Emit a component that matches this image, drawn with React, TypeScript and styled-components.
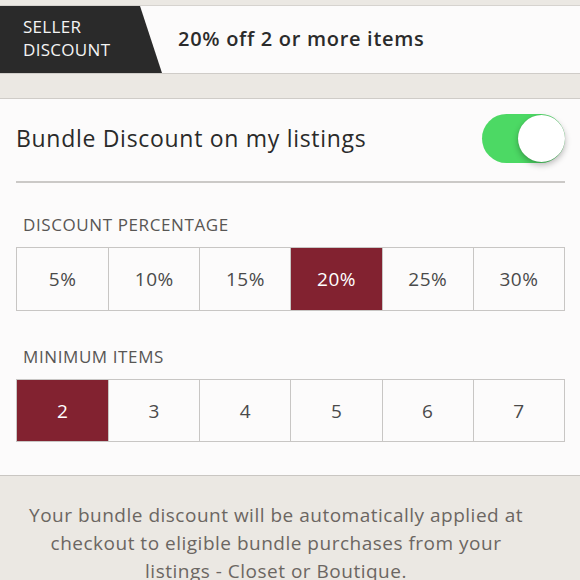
import React from 'react';
import styled, { createGlobalStyle } from 'styled-components';

const GlobalStyle = createGlobalStyle`
  html, body {
    margin: 0;
    padding: 0;
    background: #ebe8e3;
    font-family: "Open Sans", Lato, sans-serif;
  }
`;

const Page = styled.div`
  width: 580px;
  height: 580px;
  overflow: hidden;
  background: #ebe8e3;
  padding-top: 5px;
  box-sizing: border-box;
`;

const Banner = styled.div`
  height: 69px;
  display: flex;
  align-items: center;
  background: #fcfbfb;
  border-top: 1px solid #d6d3cf;
  border-bottom: 1px solid #cfccc8;
  box-sizing: border-box;
`;

const Tag = styled.div`
  height: 100%;
  width: 162px;
  background: #2a2a2a;
  clip-path: polygon(0 0, 140px 0, 162px 100%, 0 100%);
  color: #f4f4f4;
  font-size: 17px;
  letter-spacing: 0.3px;
  line-height: 23px;
  padding-left: 23px;
  padding-bottom: 4px;
  box-sizing: border-box;
  display: flex;
  flex-direction: column;
  justify-content: center;
`;

const BannerTitle = styled.div`
  margin-left: 16px;
  margin-bottom: 3px;
  font-size: 20px;
  font-weight: 600;
  letter-spacing: 0.7px;
  color: #2b2b2b;
`;

const Panel = styled.div`
  margin-top: 24px;
  background: #fcfbfb;
  border-top: 1px solid #cfccc8;
  border-bottom: 1px solid #c9c6c2;
  padding: 0 15px 0 16px;
  height: 378px;
  box-sizing: border-box;
`;

const ToggleRow = styled.div`
  height: 82px;
  display: flex;
  align-items: center;
  justify-content: space-between;
  border-bottom: 2px solid #cbc9c7;
`;

const ToggleLabel = styled.div`
  font-size: 23px;
  letter-spacing: 0.7px;
  color: #2a2a2a;
  padding-bottom: 4px;
`;

const Switch = styled.div<{ $on: boolean }>`
  width: 83px;
  height: 49px;
  border-radius: 25px;
  background: ${({ $on }) => ($on ? '#4cd964' : '#e5e5e5')};
  position: relative;
  margin-top: -4px;
  &::after {
    content: '';
    position: absolute;
    top: 1px;
    right: ${({ $on }) => ($on ? '0' : 'auto')};
    left: ${({ $on }) => ($on ? 'auto' : '0')};
    width: 47px;
    height: 47px;
    border-radius: 50%;
    background: #fff;
    box-shadow: 0 3px 6px rgba(0, 0, 0, 0.28), 0 0 1px rgba(0, 0, 0, 0.2);
  }
`;

const SectionLabel = styled.div<{ $top: number }>`
  margin-top: ${({ $top }) => $top}px;
  padding-left: 7px;
  font-size: 17px;
  letter-spacing: 0.6px;
  color: #585654;
  height: 24px;
  line-height: 24px;
`;

const Segments = styled.div<{ $height: number }>`
  margin-top: 10px;
  display: grid;
  grid-template-columns: repeat(6, 1fr);
  height: ${({ $height }) => $height}px;
  border: 1px solid #c8c6c4;
  box-sizing: border-box;
`;

const Segment = styled.div<{ $active: boolean }>`
  display: flex;
  align-items: center;
  justify-content: center;
  font-size: 19px;
  letter-spacing: 0.5px;
  color: ${({ $active }) => ($active ? '#ffffff' : '#4a4a4a')};
  background: ${({ $active }) => ($active ? '#822230' : 'transparent')};
  border-left: 1px solid #c8c6c4;
  &:first-child {
    border-left: none;
  }
`;

const Note = styled.div`
  padding: 25px 44px 0 16px;
  text-align: center;
  font-size: 19px;
  letter-spacing: 0.5px;
  line-height: 28px;
  color: #6b6662;
`;

const percents = ['5%', '10%', '15%', '20%', '25%', '30%'];
const counts = ['2', '3', '4', '5', '6', '7'];

export default function App() {
  return (
    <Page>
      <GlobalStyle />
      <Banner>
        <Tag>
          <span>SELLER</span>
          <span>DISCOUNT</span>
        </Tag>
        <BannerTitle>20% off 2 or more items</BannerTitle>
      </Banner>
      <Panel>
        <ToggleRow>
          <ToggleLabel>Bundle Discount on my listings</ToggleLabel>
          <Switch $on />
        </ToggleRow>
        <SectionLabel $top={30}>DISCOUNT PERCENTAGE</SectionLabel>
        <Segments $height={64}>
          {percents.map((p) => (
            <Segment key={p} $active={p === '20%'}>{p}</Segment>
          ))}
        </Segments>
        <SectionLabel $top={34}>MINIMUM ITEMS</SectionLabel>
        <Segments $height={63}>
          {counts.map((c) => (
            <Segment key={c} $active={c === '2'}>{c}</Segment>
          ))}
        </Segments>
      </Panel>
      <Note>
        Your bundle discount will be automatically applied at checkout to eligible bundle purchases from your listings - Closet or Boutique.
      </Note>
    </Page>
  );
}
